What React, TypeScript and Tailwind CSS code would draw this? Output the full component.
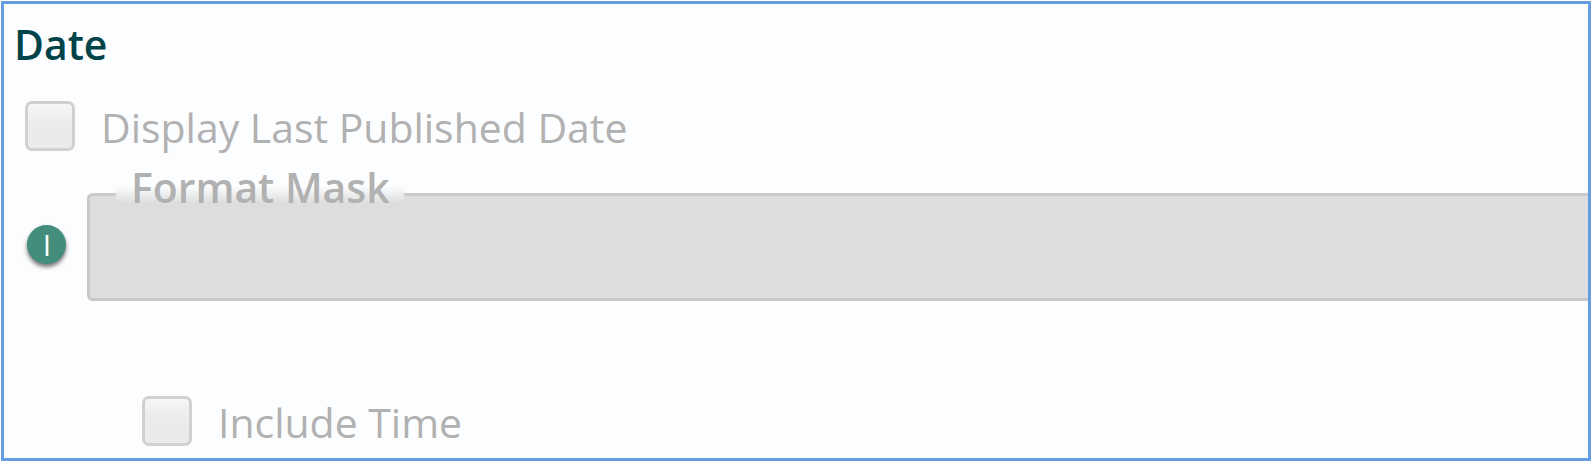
import React from 'react'

function Checkbox({ label }: { label: string }): React.ReactElement {
  return (
    <label className="flex items-center gap-[26px]">
      <span className="h-[50px] w-[50px] flex-shrink-0 rounded-[7px] border-[3px] border-[#d0d0d0] bg-gradient-to-b from-[#f6f6f6] to-[#ebebeb] to-45%" />
      <span className="pt-[2px] text-[40.95px] leading-[48px] text-[#b1b1b1]">{label}</span>
    </label>
  )
}

export default function App(): React.ReactElement {
  return (
    <div className="h-[464px] w-[1592px] bg-white px-px pt-px pb-[3px] font-['Open_Sans',sans-serif]">
      <div className="flex h-full flex-col overflow-hidden rounded-[1px] border-[3px] border-[#659de0] bg-[#fcfdff]">
        <h2 className="mt-[12px] ml-[10px] h-[56px] text-[40.9px] leading-[56px] font-semibold text-[#004348]">Date</h2>
        <div className="mt-[29px] ml-[21px]">
          <Checkbox label="Display Last Published Date" />
        </div>
        <div className="mt-[35px] flex h-[115px] items-start pl-[23px]">
          <span className="mt-[39px] flex h-[39px] w-[39px] flex-shrink-0 items-center justify-center rounded-full bg-[#428d7b] pl-px text-[30px] leading-[39px] font-medium text-white shadow-[0_3px_4px_rgba(0,0,0,0.55)]">
            I
          </span>
          <fieldset className="ml-[21px] h-[115px] flex-1 rounded-l-[6px] border-[3px] border-r-0 border-[#c9c9c9] bg-[#dddddd] pl-[26px]">
            {/* Label text rises above the fading strip that covers the border */}
            <legend className="flex h-[17px] items-end bg-gradient-to-b from-[#fcfdff] to-[#dddddd] pr-[14px] pl-[15px] text-[40.9px] leading-[32px] font-semibold text-[#b1b1b1]">
              Format Mask
            </legend>
          </fieldset>
        </div>
        <div className="mt-[95px] ml-[138px]">
          <Checkbox label="Include Time" />
        </div>
      </div>
    </div>
  )
}
